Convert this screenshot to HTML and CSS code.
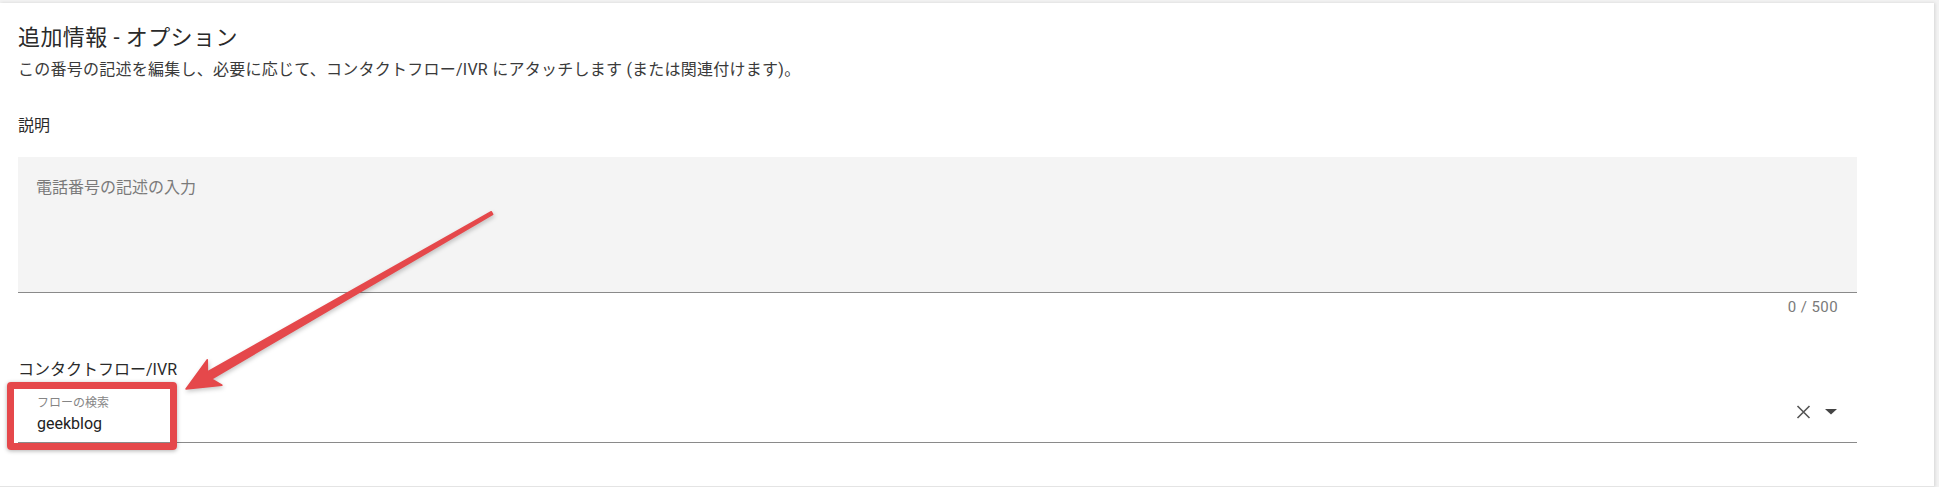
FILE: index.html
```html
<!DOCTYPE html>
<html lang="ja">
<head>
<meta charset="utf-8">
<title>追加情報 - オプション</title>
<link rel="stylesheet" href="styles.css">
</head>
<body>
<div class="page">
  <section class="card">
    <header class="head">
      <h2 class="title">追加情報 - オプション</h2>
      <p class="desc">この番号の記述を編集し、必要に応じて、コンタクトフロー/IVR にアタッチします (または関連付けます)。</p>
    </header>

    <div class="field field-desc">
      <label class="label" for="desc">説明</label>
      <textarea id="desc" class="textarea" placeholder="電話番号の記述の入力"></textarea>
      <div class="counter">0 / 500</div>
    </div>

    <div class="field field-flow">
      <div class="label">コンタクトフロー/IVR</div>
      <div class="combo">
        <div class="combo-text">
          <span class="combo-label">フローの検索</span>
          <span class="combo-value">geekblog</span>
        </div>
        <div class="combo-icons">
          <svg class="icon-clear" width="15" height="14" viewBox="0 0 15 14" aria-hidden="true">
            <path d="M1.5 1 L13.5 13 M13.5 1 L1.5 13" stroke="#555" stroke-width="1.6" fill="none"/>
          </svg>
          <svg class="icon-caret" width="12" height="6" viewBox="0 0 12 6" aria-hidden="true">
            <polygon points="0,0 12,0 6,5.5" fill="#444"/>
          </svg>
        </div>
      </div>
    </div>
  </section>

  <div class="highlight"></div>
  <svg class="arrow" width="1939" height="487" viewBox="0 0 1939 487" aria-hidden="true">
    <polygon points="186,389 221.9,385.2 211.4,379 492.75,214.3 491.25,211.7 207.4,372 207.3,359.8"
      fill="#e5484b" stroke="#e5484b" stroke-width="1.5" stroke-linejoin="round"/>
  </svg>
</div>
</body>
</html>
```

FILE: styles.css
```css
html, body {
  margin: 0;
  padding: 0;
}

body {
  background: #f2f2f2;
  font-family: Roboto, "Noto Sans CJK JP", sans-serif;
  color: #222222;
  height: 487px;
  overflow: hidden;
}

.page {
  position: relative;
  padding-top: 3px;
  padding-right: 5px;
}

.card {
  background: #ffffff;
  padding: 21px 77px 43px 18px;
  box-shadow: 1px 0 3px rgba(0, 0, 0, 0.12);
  border-bottom: 1px solid #e4e4e4;
}

.head {
  display: flex;
  flex-direction: column;
}

.title {
  margin: 0;
  font-size: 22px;
  line-height: 28px;
  font-weight: 400;
  letter-spacing: 0.4px;
  color: #2a2a2a;
}

.desc {
  margin: 7px 0 0;
  font-size: 16px;
  line-height: 22px;
  letter-spacing: 0.25px;
  color: #3a3a3a;
}

.field {
  display: flex;
  flex-direction: column;
}

.field-desc {
  margin-top: 34px;
}

.field-flow {
  margin-top: 42px;
}

.label {
  display: block;
  font-size: 16px;
  line-height: 22px;
  color: #2a2a2a;
}

.field-desc .label {
  margin-bottom: 20px;
}

.textarea {
  display: block;
  box-sizing: border-box;
  width: 100%;
  height: 136px;
  margin: 0;
  padding: 20px 18px;
  border: none;
  border-bottom: 1px solid #8a8a8a;
  border-radius: 0;
  background: #f4f4f4;
  font-family: Roboto, "Noto Sans CJK JP", sans-serif;
  font-size: 16px;
  line-height: 22px;
  color: #222222;
  resize: none;
  outline: none;
}

.textarea::placeholder {
  color: #7a7a7a;
  opacity: 1;
}

.counter {
  margin-top: 4px;
  padding-right: 19px;
  text-align: right;
  font-size: 15px;
  line-height: 20px;
  letter-spacing: 0.4px;
  color: #7a7a7a;
}

.combo {
  display: flex;
  justify-content: space-between;
  align-items: flex-start;
  padding: 14px 20px 7px 19px;
  border-bottom: 1px solid #8a8a8a;
}

.combo-text {
  display: flex;
  flex-direction: column;
}

.combo-label {
  font-size: 12px;
  line-height: 16px;
  color: #858585;
}

.combo-value {
  margin-top: 2px;
  font-size: 16px;
  line-height: 22px;
  color: #222222;
}

.combo-icons {
  display: flex;
  align-items: flex-start;
  gap: 14px;
}

.icon-clear {
  display: block;
  margin-top: 10px;
}

.icon-caret {
  display: block;
  margin-top: 14px;
}

.highlight {
  position: absolute;
  left: 7px;
  top: 382px;
  width: 170px;
  height: 68px;
  box-sizing: border-box;
  border: 7px solid #e5484b;
  border-radius: 4px;
  box-shadow: 0 1px 4px rgba(0, 0, 0, 0.3);
  pointer-events: none;
}

.arrow {
  position: absolute;
  left: 0;
  top: 0;
  pointer-events: none;
  filter: drop-shadow(1px 2px 2px rgba(0, 0, 0, 0.22));
}
```
